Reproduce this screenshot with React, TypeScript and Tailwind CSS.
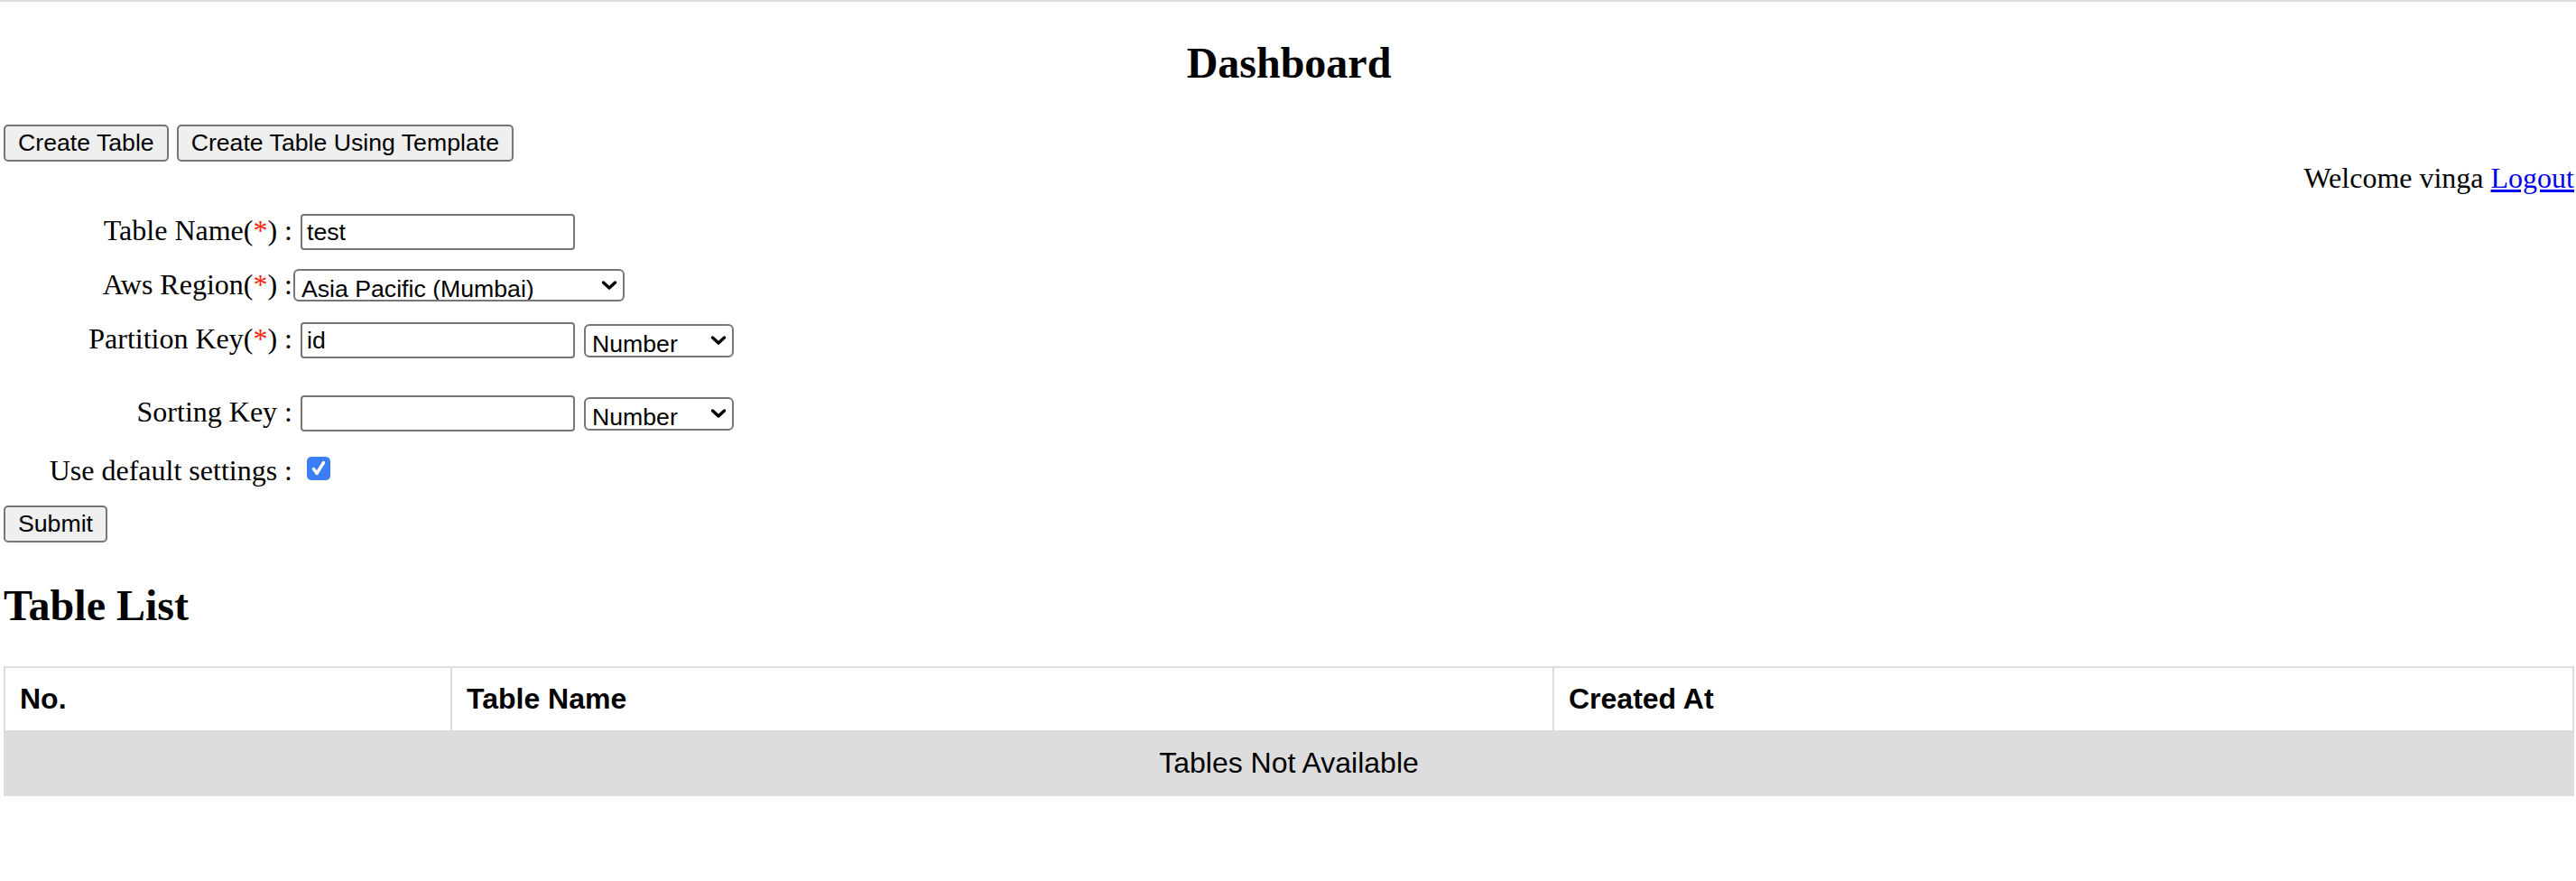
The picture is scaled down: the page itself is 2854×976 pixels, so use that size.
import React from "react";

const sans = "font-['Liberation_Sans',Arial,sans-serif]";

function Chevron({ right }: { right: string }) {
  return (
    <svg
      width="18"
      height="11"
      viewBox="0 0 18 11"
      className={`pointer-events-none absolute top-1/2 -translate-y-1/2 ${right}`}
    >
      <path
        d="M2.5 2.5L9 8.5L15.5 2.5"
        fill="none"
        stroke="#000"
        strokeWidth="3.4"
        strokeLinecap="round"
        strokeLinejoin="round"
      />
    </svg>
  );
}

function Req() {
  return <span className="text-[#ff1f0f]">*</span>;
}

function TextInput({ value }: { value?: string }) {
  return (
    <input
      type="text"
      defaultValue={value}
      className={`h-[40px] w-[304px] rounded-[4px] border-2 border-[#767676] bg-white pl-[5px] text-[26.67px] text-black outline-none ${sans}`}
    />
  );
}

function TypeSelect() {
  return (
    <span className="relative ml-[10px] inline-flex">
      <select
        defaultValue="N"
        className={`h-[37px] w-[166px] appearance-none rounded-[6px] border-2 border-[#767676] bg-white pl-[7px] text-[26.67px] text-black outline-none ${sans}`}
      >
        <option value="S">String</option>
        <option value="N">Number</option>
        <option value="B">Binary</option>
      </select>
      <Chevron right="right-[8px]" />
    </span>
  );
}

function Btn({ children, className = "" }: { children: React.ReactNode; className?: string }) {
  return (
    <button
      type="button"
      className={`h-[41px] rounded-[5px] border-2 border-[#767676] bg-[#efefef] px-[14px] text-[26.67px] leading-none text-black ${sans} ${className}`}
    >
      {children}
    </button>
  );
}

export default function App() {
  return (
    <div className="min-h-screen bg-white font-['Liberation_Serif','Times_New_Roman',serif] text-[32px] text-black">
      <div className="h-[2px] bg-[#dcdce1]" />
      <div className="pl-[4px] pr-[2px]">
        <h2 className="mb-[40px] mt-[40px] text-center text-[48px] font-bold leading-[55px]">Dashboard</h2>

        <div className="flex pt-[1px]">
          <Btn>Create Table</Btn>
          <Btn className="ml-[9px]">Create Table Using Template</Btn>
        </div>

        <div className="text-right leading-[37px]">
          Welcome vinga{" "}
          <a href="#" className="text-[#0000ee] underline">
            Logout
          </a>
        </div>

        <form className="flex flex-col">
          <div className="mt-[21px] flex h-[40px] items-center">
            <label className="w-[320px] pb-[3px] text-right leading-[37px]">
              Table Name(<Req />) :
            </label>
            <span className="ml-[9px] inline-flex">
              <TextInput value="test" />
            </span>
          </div>

          <div className="mt-[21px] flex h-[36px] items-center">
            <label className="w-[320px] pb-[2px] text-right leading-[37px]">
              Aws Region(<Req />) :
            </label>
            <span className="relative ml-[1px] inline-flex">
              <select
                defaultValue="ap-south-1"
                className={`h-[36px] w-[367px] appearance-none rounded-[6px] border-2 border-[#767676] bg-white pl-[7px] text-[26.67px] text-black outline-none ${sans}`}
              >
                <option value="us-east-1">US East (N. Virginia)</option>
                <option value="us-west-2">US West (Oregon)</option>
                <option value="ap-south-1">Asia Pacific (Mumbai)</option>
                <option value="eu-west-1">Europe (Ireland)</option>
              </select>
              <Chevron right="right-[8px]" />
            </span>
          </div>

          <div className="mt-[23px] flex h-[40px] items-center">
            <label className="w-[320px] pb-[3px] text-right leading-[37px]">
              Partition Key(<Req />) :
            </label>
            <span className="ml-[9px] inline-flex">
              <TextInput value="id" />
            </span>
            <TypeSelect />
          </div>

          <div className="mt-[41px] flex h-[40px] items-center">
            <label className="w-[320px] pb-[3px] text-right leading-[37px]">Sorting Key :</label>
            <span className="ml-[9px] inline-flex">
              <TextInput />
            </span>
            <TypeSelect />
          </div>

          <div className="mt-[28px] flex h-[26px] items-center">
            <label className="w-[320px] pt-[4px] text-right leading-[37px]">Use default settings :</label>
            <span className="relative ml-[16px] inline-flex h-[26px] w-[26px] items-center justify-center rounded-[5px] bg-[#3b7ef6]">
              <input
                type="checkbox"
                defaultChecked
                className="absolute inset-0 m-0 cursor-pointer appearance-none"
              />
              <svg width="26" height="26" viewBox="0 0 26 26" className="pointer-events-none">
                <path
                  d="M7.5 13.5L11 18.5L18.5 6.5"
                  fill="none"
                  stroke="#fff"
                  strokeWidth="3.4"
                  strokeLinecap="round"
                  strokeLinejoin="round"
                />
              </svg>
            </span>
          </div>

          <div className="mt-[28px] flex">
            <Btn>Submit</Btn>
          </div>
        </form>

        <h2 className="mb-[40px] mt-[42px] text-[48px] font-bold leading-[55px]">Table List</h2>

        <table className={`w-full table-fixed border-collapse border-2 border-[#dddddd] text-[32px] ${sans}`}>
          <colgroup>
            <col className="w-[495px]" />
            <col className="w-[1221px]" />
            <col />
          </colgroup>
          <thead>
            <tr>
              <th className="border-2 border-[#dddddd] p-[16px] text-left font-bold leading-[36.8px]">No.</th>
              <th className="border-2 border-[#dddddd] p-[16px] text-left font-bold leading-[36.8px]">Table Name</th>
              <th className="border-2 border-[#dddddd] p-[16px] text-left font-bold leading-[36.8px]">Created At</th>
            </tr>
          </thead>
          <tbody>
            <tr className="bg-[#dddddd]">
              <td colSpan={3} className="border-2 border-[#dddddd] p-[16px] text-center leading-[36.8px]">
                Tables Not Available
              </td>
            </tr>
          </tbody>
        </table>
      </div>
    </div>
  );
}
